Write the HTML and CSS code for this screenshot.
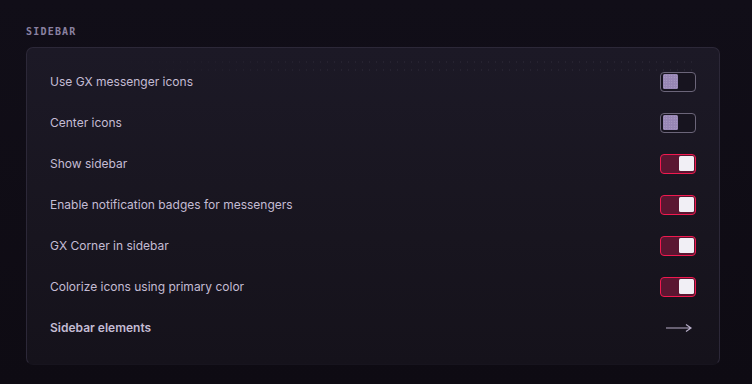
FILE: index.html
```html
<!DOCTYPE html>
<html>
<head>
<meta charset="utf-8">
<link rel="stylesheet" href="styles.css">
</head>
<body>
<div class="page">
  <div class="section-title">SIDEBAR</div>
  <div class="card">
    <div class="dots"></div>
    <div class="row"><span class="label">Use GX messenger icons</span><span class="toggle off"><span class="knob"></span></span></div>
    <div class="row"><span class="label">Center icons</span><span class="toggle off"><span class="knob"></span></span></div>
    <div class="row"><span class="label">Show sidebar</span><span class="toggle on"><span class="knob"></span></span></div>
    <div class="row"><span class="label">Enable notification badges for messengers</span><span class="toggle on"><span class="knob"></span></span></div>
    <div class="row"><span class="label">GX Corner in sidebar</span><span class="toggle on"><span class="knob"></span></span></div>
    <div class="row"><span class="label">Colorize icons using primary color</span><span class="toggle on"><span class="knob"></span></span></div>
    <div class="row link"><span class="label strong">Sidebar elements</span>
      <svg class="arrow" width="28" height="10" viewBox="0 0 28 10"><path d="M1 5H26M21 1.5L26 5L21 8.5" fill="none" stroke="#b7aec8" stroke-width="1.2"/></svg>
    </div>
  </div>
</div>
</body>
</html>
```

FILE: styles.css
```css
html, body {
  margin: 0;
  padding: 0;
}
body {
  background: #0f0c15;
  width: 752px;
  height: 384px;
  overflow: hidden;
  font-family: Inter, "Noto Sans", sans-serif;
}
.page {
  padding: 25px 32px 0 26px;
  background: linear-gradient(180deg, #110e18 0%, #0e0b13 100%);
  height: 384px;
  box-sizing: border-box;
}
.section-title {
  font-family: "DejaVu Sans Mono", monospace;
  font-size: 10px;
  font-weight: bold;
  letter-spacing: 1.2px;
  color: #8a81a1;
  line-height: 14px;
  height: 14px;
  margin-bottom: 8px;
}
.card {
  position: relative;
  width: 694px;
  height: 318px;
  box-sizing: border-box;
  border-radius: 7px;
  border: 1px solid #2c2838;
  border-bottom-color: #17141e;
  background: linear-gradient(180deg, #1c1926 0%, #18151f 60%, #15121b 100%);
  padding: 13px 23px 0 23px;
}
.dots {
  position: absolute;
  top: 10px;
  left: 80px;
  right: 24px;
  height: 14px;
  background-image: radial-gradient(circle, #34303f 0.6px, transparent 0.9px);
  background-size: 7px 8px;
  opacity: 0.45;
  -webkit-mask-image: linear-gradient(90deg, transparent 0%, #000 40%, #000 100%);
}
.row {
  position: relative;
  display: flex;
  align-items: center;
  justify-content: space-between;
  height: 41px;
}
.label {
  font-size: 12px;
  color: #c4bcd4;
}
.label.strong {
  font-weight: 600;
}
.toggle {
  width: 36px;
  height: 20px;
  box-sizing: border-box;
  border-radius: 4px;
  display: flex;
  align-items: center;
  padding: 0 1.5px;
}
.toggle.off {
  border: 1.5px solid #6b6579;
  background: #17141f;
  justify-content: flex-start;
}
.toggle.on {
  border: 1.5px solid #f0194f;
  background: #5a1631;
  justify-content: flex-end;
}
.knob {
  width: 15px;
  height: 15px;
  border-radius: 1.5px;
}
.toggle.off .knob {
  background-color: #9786b4;
  background-image: radial-gradient(circle, #b4a6cb 0.5px, transparent 0.8px);
  background-size: 2.5px 2.5px;
}
.toggle.on .knob {
  background: #f1eff5;
}
.arrow {
  margin-right: 3px;
}
```
